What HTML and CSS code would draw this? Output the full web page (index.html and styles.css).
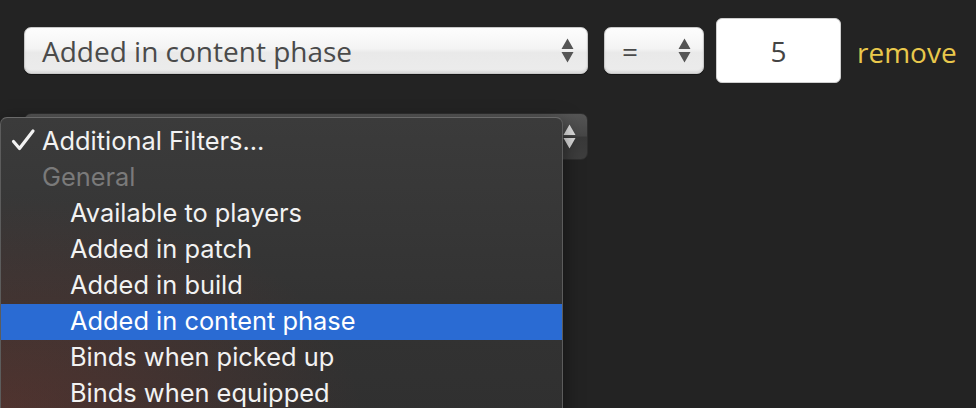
FILE: index.html
```html
<!DOCTYPE html>
<html>
<head>
<meta charset="utf-8">
<link rel="stylesheet" href="styles.css">
</head>
<body>
<div class="page">
  <div class="row row-top">
    <div class="select select-wide">
      <span class="select-label">Added in content phase</span>
      <svg class="arrows" width="13" height="26" viewBox="0 0 13 26"><path d="M6.5 0.5 L12.5 11 L0.5 11 Z M0.5 14 L12.5 14 L6.5 24.5 Z" fill="#555"/></svg>
    </div>
    <div class="select select-op">
      <span class="select-label">=</span>
      <svg class="arrows" width="13" height="26" viewBox="0 0 13 26"><path d="M6.5 0.5 L12.5 11 L0.5 11 Z M0.5 14 L12.5 14 L6.5 24.5 Z" fill="#555"/></svg>
    </div>
    <div class="num-input">5</div>
    <span class="remove">remove</span>
  </div>
  <div class="row row-second">
    <div class="select select-dark">
      <span class="select-label"></span>
      <svg class="arrows" width="13" height="26" viewBox="0 0 13 26"><path d="M6.5 0.5 L12.5 11 L0.5 11 Z M0.5 14 L12.5 14 L6.5 24.5 Z" fill="#ddd"/></svg>
    </div>
  </div>
  <div class="menu">
    <div class="menu-item checked"><svg class="check" width="25" height="24" viewBox="0 0 25 24"><path d="M2.5 13.5 L8.5 20.5 L22 3" fill="none" stroke="#f2f2f2" stroke-width="3.2" stroke-linecap="round" stroke-linejoin="round"/></svg>Additional Filters...</div>
    <div class="menu-item group">General</div>
    <div class="menu-item sub">Available to players</div>
    <div class="menu-item sub">Added in patch</div>
    <div class="menu-item sub">Added in build</div>
    <div class="menu-item sub active">Added in content phase</div>
    <div class="menu-item sub">Binds when picked up</div>
    <div class="menu-item sub">Binds when equipped</div>
  </div>
</div>
</body>
</html>
```
FILE: styles.css
```css
html, body {
  margin: 0;
  padding: 0;
  background: #232323;
  width: 976px;
  height: 408px;
  overflow: hidden;
}
.page {
  position: relative;
  padding: 18px 0 0 24px;
  font-family: "Open Sans", sans-serif;
}
.row {
  display: flex;
  align-items: center;
}
.row-top {
  height: 65px;
}
.select {
  box-sizing: border-box;
  height: 47px;
  border-radius: 7px;
  display: flex;
  align-items: center;
  justify-content: space-between;
  padding: 0 13px 0 17px;
  background: linear-gradient(#fdfdfd 0%, #f4f4f4 45%, #e9e9e9 55%, #ececec 100%);
  border: 1px solid #c8c8c8;
  box-shadow: inset 0 -2px 2px rgba(0,0,0,0.08), 0 1px 0 rgba(0,0,0,0.4);
}
.select-label {
  font-size: 28px;
  line-height: 1;
  color: #4a4a4a;
}
.select-wide {
  width: 564px;
}
.select-op {
  width: 100px;
  margin-left: 16px;
  padding-left: 17px;
  padding-right: 12px;
}
.num-input {
  box-sizing: border-box;
  width: 125px;
  height: 65px;
  margin-left: 12px;
  background: #fff;
  border: 1px solid #cfcfcf;
  border-radius: 6px;
  display: flex;
  align-items: center;
  justify-content: center;
  font-size: 28px;
  color: #444;
}
.remove {
  margin-left: 16px;
  font-size: 28px;
  color: #e9c84c;
  padding-top: 2px;
}
.row-second {
  margin-top: 30px;
}
.select-dark {
  width: 564px;
  background: linear-gradient(#555 0%, #474747 48%, #393939 52%, #3e3e3e 100%);
  border: 1px solid #2e2e2e;
  box-shadow: none;
  padding-right: 11px;
}
.arrows {
  display: block;
}
.menu {
  position: absolute;
  left: 0;
  top: 117px;
  width: 563px;
  height: 300px;
  box-sizing: border-box;
  border: 1px solid #5c5c5c;
  border-top-color: #6a6a6a;
  border-radius: 7px 7px 0 0;
  background:
    radial-gradient(ellipse 360px 220px at 0% 100%, rgba(120,55,45,0.45), rgba(120,55,45,0) 100%),
    linear-gradient(#3b3b3b, #333 60%, #303030);
  box-shadow: 0 6px 20px rgba(0,0,0,0.5);
  padding-top: 6px;
  font-family: "Inter", "Noto Sans", sans-serif;
}
.menu-item {
  height: 36px;
  line-height: 33px;
  font-size: 25.4px;
  color: #f2f2f2;
  padding-left: 69px;
  position: relative;
  white-space: nowrap;
}
.menu-item.checked {
  padding-left: 41px;
}
.check {
  position: absolute;
  left: 10px;
  top: 4px;
}
.menu-item.group {
  padding-left: 41px;
  color: #7a7a7a;
}
.menu-item.active {
  background: #2a6bd3;
  color: #fff;
}
```
